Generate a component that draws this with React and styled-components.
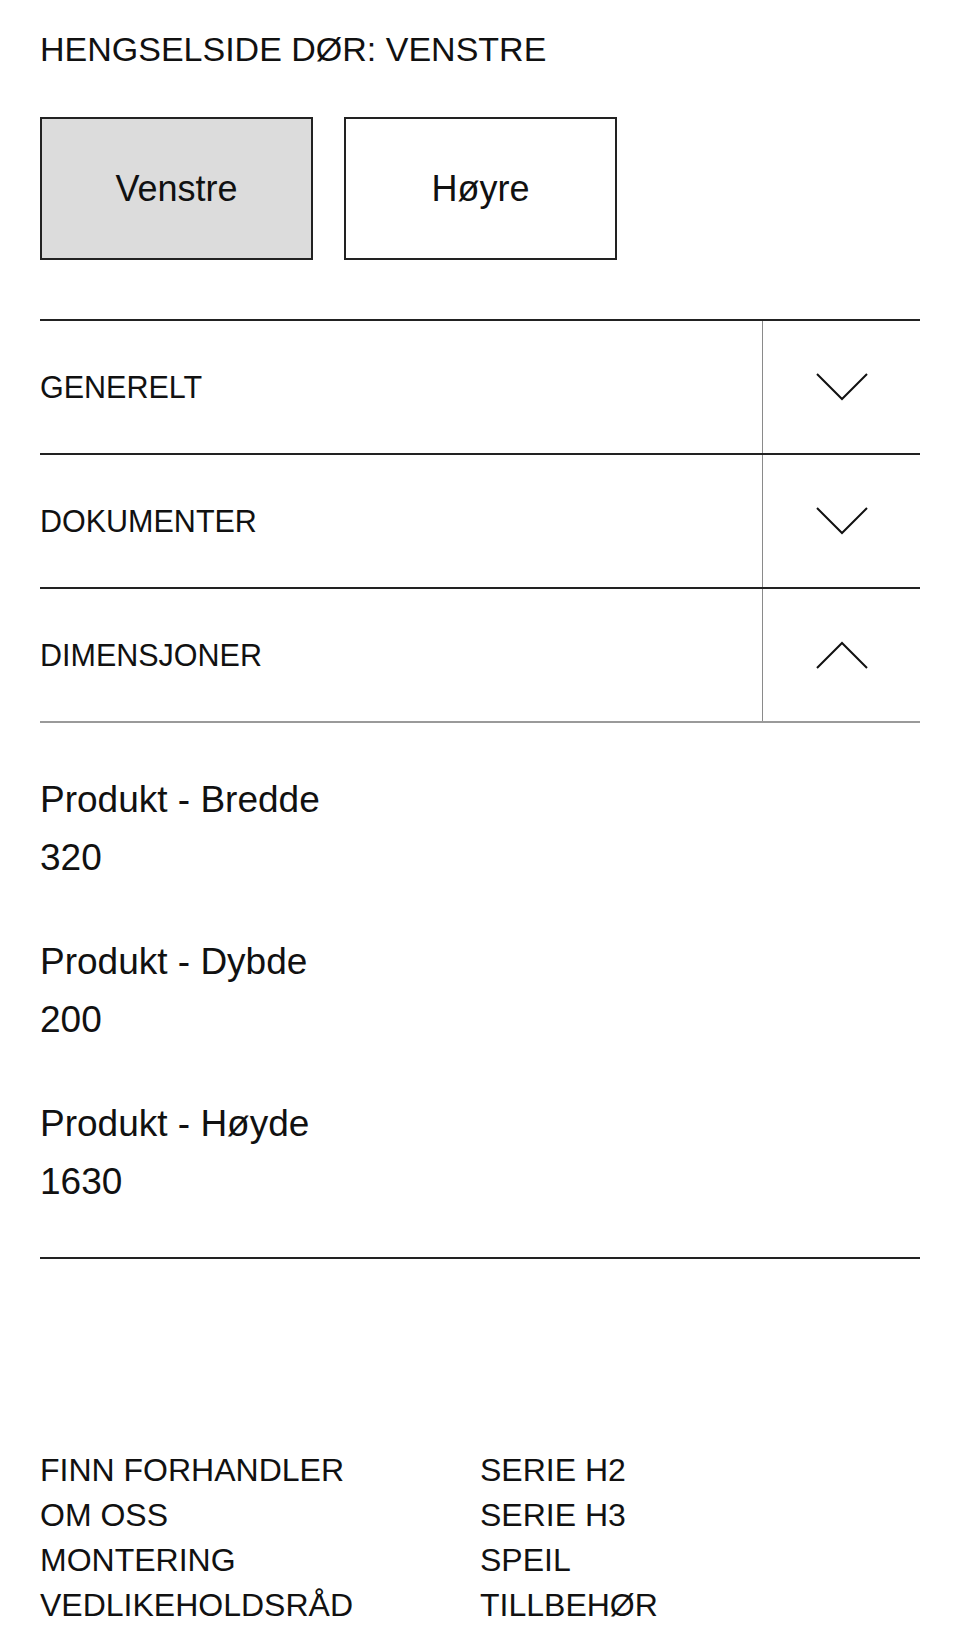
import styled, { createGlobalStyle } from "styled-components";

const GlobalStyle = createGlobalStyle`
  html, body {
    margin: 0;
    padding: 0;
    background: #ffffff;
  }
  body {
    font-family: "Liberation Sans", Arial, sans-serif;
    color: #111111;
  }
  * {
    box-sizing: border-box;
  }
`;

const Page = styled.div`
  width: 960px;
  padding: 29px 40px 15px;
`;

const Heading = styled.h1`
  margin: 0;
  font-size: 34px;
  font-weight: 400;
  line-height: 41px;
  text-transform: uppercase;
`;

const ToggleRow = styled.div`
  display: flex;
  gap: 31px;
  margin-top: 47px;
`;

const ToggleButton = styled.button`
  width: 273px;
  height: 143px;
  border: 2px solid #222222;
  background: ${(p) => (p.$active ? "#dcdcdc" : "#ffffff")};
  color: #111111;
  font-family: inherit;
  font-size: 36px;
  cursor: pointer;
`;

const Accordion = styled.div`
  margin-top: 59px;
`;

const Item = styled.div`
  display: grid;
  grid-template-columns: 1fr 158px;
  height: 134px;
  border-top: 2px solid #222222;
`;

const ItemLabel = styled.div`
  display: flex;
  align-items: center;
  font-size: 30.5px;
  text-transform: uppercase;
`;

const IconCell = styled.div`
  display: flex;
  align-items: center;
  justify-content: center;
  border-left: 1.5px solid #8a8a8a;
`;

const Panel = styled.div`
  display: flex;
  flex-direction: column;
  gap: 47px;
  padding: 48px 0 46px;
  border-top: 2px solid #9a9a9a;
  border-bottom: 2px solid #222222;
`;

const Spec = styled.div`
  font-size: 37px;
  line-height: 57.6px;
`;

const SpecLine = styled.div``;

const Footer = styled.footer`
  display: grid;
  grid-template-columns: 1fr 1fr;
  margin-top: 189px;
`;

const LinkList = styled.ul`
  margin: 0;
  padding: 0;
  list-style: none;
`;

const LinkItem = styled.li`
  font-size: 32px;
  line-height: 45px;
  text-transform: uppercase;
`;

const Chevron = ({ up }) => (
  <svg width="52" height="28" viewBox="0 0 52 28" aria-hidden="true">
    <polyline
      points={up ? "1,27 26,2 51,27" : "1,1 26,26 51,1"}
      fill="none"
      stroke="#111111"
      strokeWidth="2"
    />
  </svg>
);

const sections = [
  { title: "Generelt", open: false },
  { title: "Dokumenter", open: false },
  { title: "Dimensjoner", open: true },
];

const specs = [
  { label: "Produkt - Bredde", value: "320" },
  { label: "Produkt - Dybde", value: "200" },
  { label: "Produkt - Høyde", value: "1630" },
];

const leftLinks = ["Finn forhandler", "Om oss", "Montering", "Vedlikeholdsråd"];
const rightLinks = ["Serie H2", "Serie H3", "Speil", "Tillbehør"];

const App = () => {
  return (
    <>
      <GlobalStyle />
      <Page>
        <Heading>Hengselside dør: Venstre</Heading>
        <ToggleRow>
          <ToggleButton $active>Venstre</ToggleButton>
          <ToggleButton>Høyre</ToggleButton>
        </ToggleRow>

        <Accordion>
          {sections.map((s) => (
            <Item key={s.title}>
              <ItemLabel>{s.title}</ItemLabel>
              <IconCell>
                <Chevron up={s.open} />
              </IconCell>
            </Item>
          ))}
          <Panel>
            {specs.map((s) => (
              <Spec key={s.label}>
                <SpecLine>{s.label}</SpecLine>
                <SpecLine>{s.value}</SpecLine>
              </Spec>
            ))}
          </Panel>
        </Accordion>

        <Footer>
          <LinkList>
            {leftLinks.map((l) => (
              <LinkItem key={l}>{l}</LinkItem>
            ))}
          </LinkList>
          <LinkList>
            {rightLinks.map((l) => (
              <LinkItem key={l}>{l}</LinkItem>
            ))}
          </LinkList>
        </Footer>
      </Page>
    </>
  );
};

export default App;
